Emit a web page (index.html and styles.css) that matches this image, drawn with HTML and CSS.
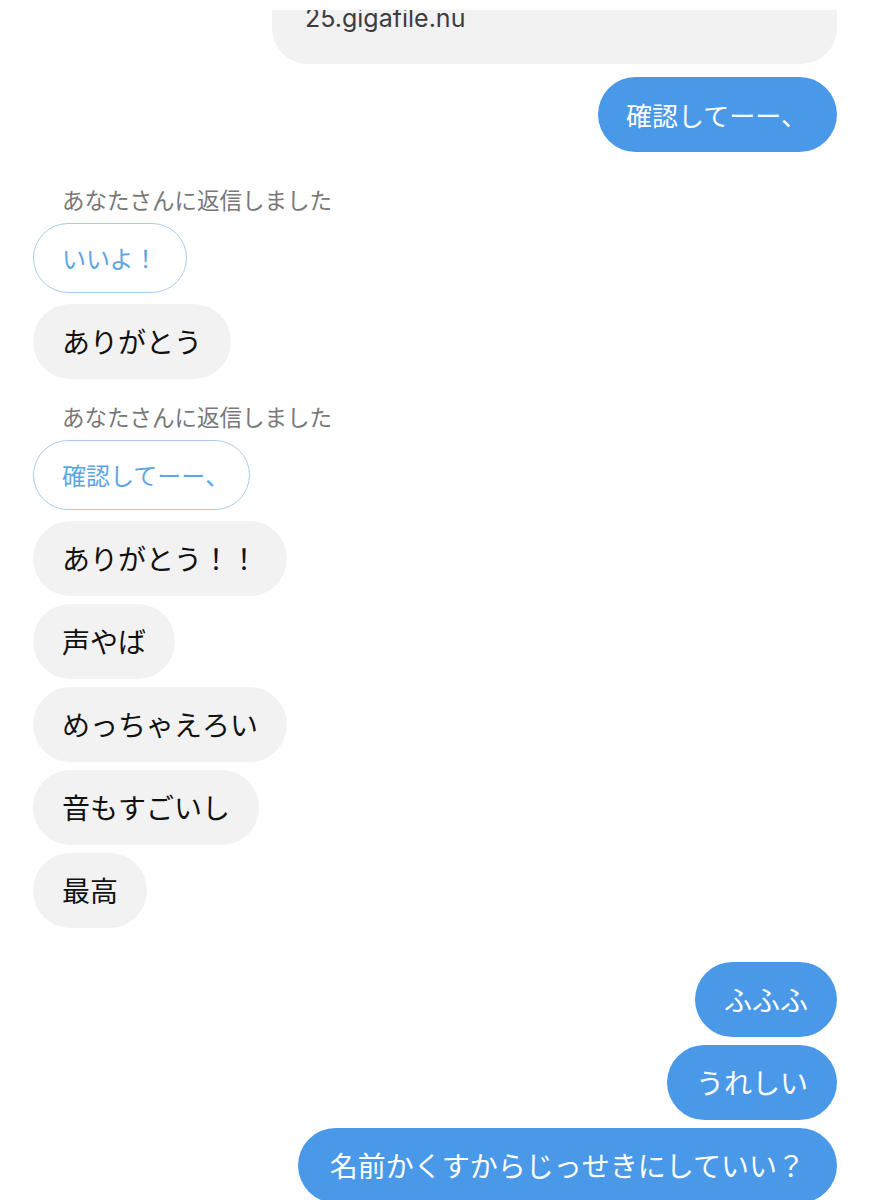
FILE: index.html
```html
<!DOCTYPE html>
<html lang="ja">
<head>
<meta charset="utf-8">
<link rel="stylesheet" href="styles.css">
</head>
<body>
<div class="chat">
  <div class="clip">
    <div class="bubble link">25.gigafile.nu</div>
  </div>
  <div class="bubble out first">確認してーー、</div>

  <div class="label l1">あなたさんに返信しました</div>
  <div class="bubble quote">いいよ！</div>
  <div class="bubble in after-quote">ありがとう</div>

  <div class="label l2">あなたさんに返信しました</div>
  <div class="bubble quote">確認してーー<span class="comma">、</span></div>
  <div class="bubble in after-quote">ありがとう！！</div>
  <div class="bubble in">声やば</div>
  <div class="bubble in">めっちゃえろい</div>
  <div class="bubble in">音もすごいし</div>
  <div class="bubble in">最高</div>

  <div class="bubble out group">ふふふ</div>
  <div class="bubble out">うれしい</div>
  <div class="bubble out long">名前かくすからじっせきにしていい？</div>
</div>
</body>
</html>
```
FILE: styles.css
```css
html, body {
  margin: 0;
  padding: 0;
  background: #ffffff;
}
body {
  width: 870px;
  height: 1200px;
  overflow: hidden;
  font-family: "Noto Sans CJK JP", "Noto Sans", sans-serif;
}
.chat {
  display: flex;
  flex-direction: column;
  align-items: flex-start;
  padding: 10px 33px 0 33px;
}
.clip {
  align-self: flex-end;
  width: 565px;
  height: 54px;
  overflow: hidden;
  display: flex;
  flex-direction: column;
  justify-content: flex-end;
}
.bubble {
  box-sizing: border-box;
  border-radius: 38px;
  font-size: 28px;
  line-height: 39px;
  padding: 18px 29px;
  white-space: nowrap;
  flex-shrink: 0;
}
.link {
  width: 565px;
  background: #f2f2f2;
  color: #3d3d3d;
  font-family: Inter, Roboto, "Noto Sans", sans-serif;
  font-size: 25px;
  line-height: 32px;
  padding: 40px 33px 30px 33px;
  border-radius: 0 0 36px 36px;
}
.out {
  align-self: flex-end;
  background: #4a98e8;
  color: #ffffff;
  margin-top: 8px;
  height: 75px;
}
.out.first {
  margin-top: 13px;
  font-size: 26px;
  padding: 18px 30px 18px 28px;
}
.out.group {
  margin-top: 34px;
}
.out.long {
  padding: 18px 32px;
}
.in {
  background: #f2f2f2;
  color: #111111;
  margin-top: 8px;
  height: 75px;
}
.in.after-quote {
  margin-top: 11px;
}
.label {
  font-size: 22.5px;
  line-height: 26px;
  color: #787878;
  padding-left: 29px;
}
.label.l1 {
  margin-top: 34px;
}
.label.l2 {
  margin-top: 24px;
}
.quote {
  margin-top: 11px;
  height: 70px;
  border: 1.5px solid #a7cdef;
  background: #ffffff;
  color: #5ea5e5;
  font-size: 24px;
  line-height: 33px;
  padding: 17px 28px;
  border-radius: 35px;
}
.comma {
  display: inline-block;
  width: 16px;
  overflow: visible;
}
```
